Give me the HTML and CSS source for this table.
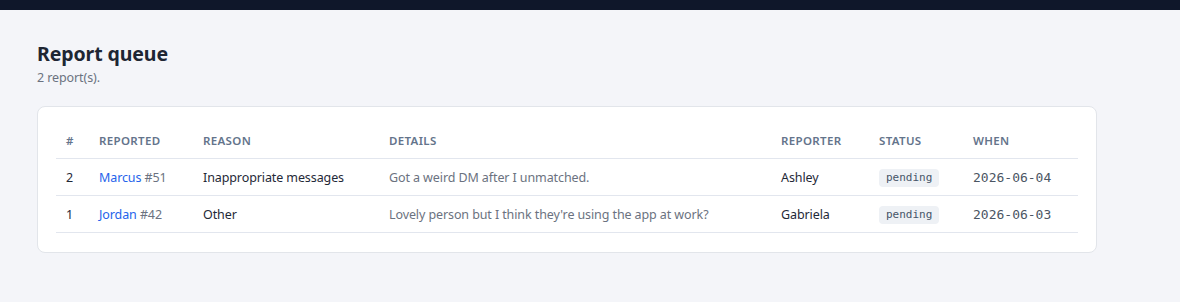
FILE: index.html
```html
<!DOCTYPE html>
<html lang="en">
<head>
    <meta charset="UTF-8">
    <meta name="viewport" content="width=device-width, initial-scale=1.0">
    <title>Report queue</title>
    <link rel="stylesheet" href="styles.css">
</head>
<body>

    <div class="topbar"></div>

    <main class="page">
        <h1 class="title">Report queue</h1>
        <p class="subtitle">2 report(s).</p>

        <div class="card">
            <table class="reports">
                <colgroup>
                    <col class="col-id">
                    <col class="col-reported">
                    <col class="col-reason">
                    <col class="col-details">
                    <col class="col-reporter">
                    <col class="col-status">
                    <col class="col-when">
                </colgroup>
                <thead>
                    <tr>
                        <th>#</th>
                        <th>Reported</th>
                        <th>Reason</th>
                        <th>Details</th>
                        <th>Reporter</th>
                        <th>Status</th>
                        <th>When</th>
                    </tr>
                </thead>
                <tbody>
                    <tr>
                        <td>2</td>
                        <td><a href="#" class="user-link">Marcus</a> <span class="muted">#51</span></td>
                        <td>Inappropriate messages</td>
                        <td class="details">Got a weird DM after I unmatched.</td>
                        <td>Ashley</td>
                        <td><span class="badge">pending</span></td>
                        <td class="date">2026-06-04</td>
                    </tr>
                    <tr>
                        <td>1</td>
                        <td><a href="#" class="user-link">Jordan</a> <span class="muted">#42</span></td>
                        <td>Other</td>
                        <td class="details">Lovely person but I think they're using the app at work?</td>
                        <td>Gabriela</td>
                        <td><span class="badge">pending</span></td>
                        <td class="date">2026-06-03</td>
                    </tr>
                </tbody>
            </table>
        </div>
    </main>

</body>
</html>
```

FILE: styles.css
```css
body {
    margin: 0;
    background-color: #f4f5f9;
    color: #1f2937;
    font-family: "Noto Sans", "Open Sans", sans-serif;
    font-size: 12.5px;
    letter-spacing: -0.1px;
}

.topbar {
    height: 10px;
    background-color: #0f172a;
}

.page {
    padding: 30px 37px;
}

.title {
    margin: 0;
    font-size: 19.5px;
    font-weight: bold;
    line-height: 28px;
    letter-spacing: -0.1px;
    color: #1e2633;
}

.subtitle {
    margin: 1px 0 0;
    color: #6b7280;
    line-height: 18px;
}

.card {
    margin-top: 19px;
    width: 1022px;
    padding: 18px 18px 19px;
    background-color: #fff;
    border: 1px solid #e2e5ea;
    border-radius: 8px;
}

.reports {
    width: 100%;
    border-collapse: collapse;
    table-layout: fixed;
}

.col-id { width: 33px; }
.col-reported { width: 104px; }
.col-reason { width: 186px; }
.col-details { width: 392px; }
.col-reporter { width: 98px; }
.col-status { width: 94px; }
.col-when { width: 115px; }

.reports th {
    text-align: left;
    padding: 8px 10px 9px;
    font-size: 11.5px;
    line-height: 16px;
    font-weight: 600;
    letter-spacing: 0.03em;
    text-transform: uppercase;
    color: #64748b;
    border-bottom: 1px solid #e2e6ee;
}

.reports td {
    padding: 0 10px;
    height: 36px;
    border-bottom: 1px solid #e2e6ee;
    white-space: nowrap;
}

.user-link {
    color: #2563eb;
    text-decoration: none;
}

.muted {
    color: #6b7280;
}

.details {
    color: #6b7280;
}

.badge {
    display: inline-block;
    padding: 1px 7px;
    line-height: 16px;
    font-family: "DejaVu Sans Mono", monospace;
    font-size: 11px;
    letter-spacing: 0;
    color: #475569;
    background-color: #eef1f5;
    border-radius: 4px;
}

.date {
    font-family: "DejaVu Sans Mono", monospace;
    font-size: 13px;
    letter-spacing: 0;
    color: #4b5563;
}
```
